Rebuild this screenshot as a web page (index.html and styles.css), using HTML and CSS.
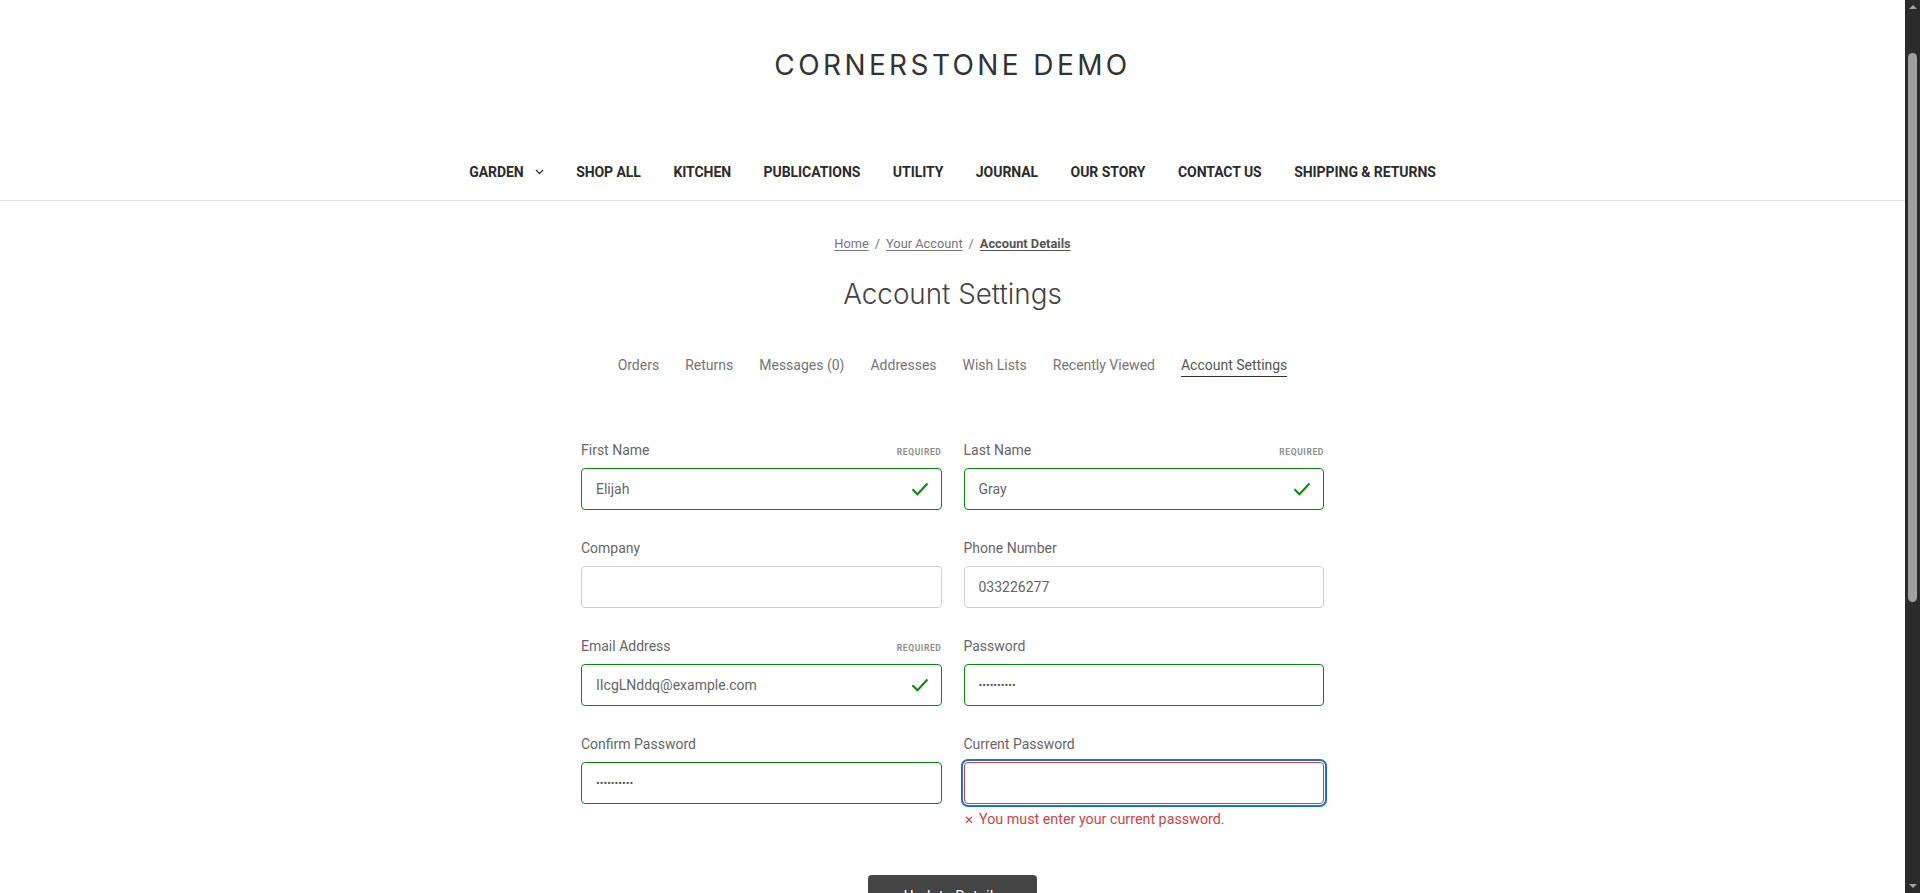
FILE: index.html
```html
<!DOCTYPE html>
<html lang="en">
<head>
<meta charset="utf-8">
<title>Account Settings - Cornerstone Demo</title>
<link rel="stylesheet" href="styles.css">
</head>
<body>
<div class="viewport">
  <div class="page">
    <header class="site-header">
      <h1 class="logo">CORNERSTONE DEMO</h1>
      <nav class="nav">
        <a class="nav-item" href="#">GARDEN <svg class="chev" width="9" height="6" viewBox="0 0 9 6"><path d="M1 1l3.5 3.5L8 1" fill="none" stroke="#333" stroke-width="1.3"/></svg></a>
        <a class="nav-item" href="#">SHOP ALL</a>
        <a class="nav-item" href="#">KITCHEN</a>
        <a class="nav-item" href="#">PUBLICATIONS</a>
        <a class="nav-item" href="#">UTILITY</a>
        <a class="nav-item" href="#">JOURNAL</a>
        <a class="nav-item" href="#">OUR STORY</a>
        <a class="nav-item" href="#">CONTACT US</a>
        <a class="nav-item" href="#">SHIPPING &amp; RETURNS</a>
      </nav>
    </header>

    <main class="account">
      <ol class="breadcrumbs">
        <li><a href="#">Home</a></li>
        <li class="sep">/</li>
        <li><a href="#">Your Account</a></li>
        <li class="sep">/</li>
        <li><a class="current" href="#">Account Details</a></li>
      </ol>
      <h2 class="page-heading">Account Settings</h2>
      <nav class="tabs">
        <a href="#">Orders</a>
        <a href="#">Returns</a>
        <a href="#">Messages (0)</a>
        <a href="#">Addresses</a>
        <a href="#">Wish Lists</a>
        <a href="#">Recently Viewed</a>
        <a href="#" class="active">Account Settings</a>
      </nav>

      <form class="form">
        <div class="grid">
          <div class="field">
            <div class="label-row"><label>First Name</label><small>REQUIRED</small></div>
            <div class="control">
              <input class="input success" type="text" value="Elijah">
              <svg class="check" width="18" height="14" viewBox="0 0 18 14"><path d="M1.5 7.2l5 5L16.5 1.5" fill="none" stroke="#0a8a0a" stroke-width="2"/></svg>
            </div>
          </div>
          <div class="field">
            <div class="label-row"><label>Last Name</label><small>REQUIRED</small></div>
            <div class="control">
              <input class="input success" type="text" value="Gray">
              <svg class="check" width="18" height="14" viewBox="0 0 18 14"><path d="M1.5 7.2l5 5L16.5 1.5" fill="none" stroke="#0a8a0a" stroke-width="2"/></svg>
            </div>
          </div>
          <div class="field">
            <div class="label-row"><label>Company</label></div>
            <div class="control"><input class="input" type="text" value=""></div>
          </div>
          <div class="field">
            <div class="label-row"><label>Phone Number</label></div>
            <div class="control"><input class="input" type="text" value="033226277"></div>
          </div>
          <div class="field">
            <div class="label-row"><label>Email Address</label><small>REQUIRED</small></div>
            <div class="control">
              <input class="input success" type="text" value="IIcgLNddq@example.com">
              <svg class="check" width="18" height="14" viewBox="0 0 18 14"><path d="M1.5 7.2l5 5L16.5 1.5" fill="none" stroke="#0a8a0a" stroke-width="2"/></svg>
            </div>
          </div>
          <div class="field">
            <div class="label-row"><label>Password</label></div>
            <div class="control"><input class="input success" type="password" value="aaaaaaaaaa"></div>
          </div>
          <div class="field">
            <div class="label-row"><label>Confirm Password</label></div>
            <div class="control"><input class="input success" type="password" value="aaaaaaaaaa"></div>
          </div>
          <div class="field">
            <div class="label-row"><label>Current Password</label></div>
            <div class="control"><input class="input error" type="password" value=""></div>
            <p class="error-msg"><span class="x">✕</span> You must enter your current password.</p>
          </div>
        </div>
        <div class="actions">
          <button type="button" class="button">Update Details</button>
        </div>
      </form>
    </main>
  </div>

  <div class="scrollbar">
    <span class="sb-up"></span>
    <span class="sb-thumb"></span>
    <span class="sb-fill"></span>
    <span class="sb-down"></span>
  </div>
</div>
</body>
</html>
```

FILE: styles.css
```css
* { box-sizing: border-box; }

html, body {
  margin: 0;
  padding: 0;
  height: 100%;
  overflow: hidden;
  background: #fff;
  font-family: Roboto, "Liberation Sans", sans-serif;
  color: #666;
}

a { color: inherit; text-decoration: none; }

.viewport {
  display: flex;
  height: 100vh;
}

.page {
  flex: 1;
  min-width: 0;
  overflow: hidden;
}

/* header */
.site-header {
  display: flex;
  flex-direction: column;
  align-items: center;
}

.logo {
  margin: 47px 0 0;
  font-family: Inter, "Open Sans", sans-serif;
  font-weight: 400;
  font-size: 28px;
  line-height: 36px;
  letter-spacing: 3.4px;
  color: #333;
}

.nav {
  margin-top: 63px;
  width: 100%;
  display: flex;
  justify-content: center;
  gap: 32.5px;
  padding: 16px 0 18px;
  border-bottom: 1px solid #e3e3e3;
}

.nav-item {
  display: flex;
  align-items: center;
  font-weight: 700;
  font-size: 14px;
  line-height: 20px;
  color: #2b2b2b;
  letter-spacing: -0.06px;
}

.chev { margin-left: 11px; }

/* account */
.account {
  display: flex;
  flex-direction: column;
  align-items: center;
}

.breadcrumbs {
  list-style: none;
  margin: 34px 0 0;
  padding: 0;
  display: flex;
  gap: 6px;
  font-size: 12.8px;
  line-height: 18px;
  color: #757575;
}

.breadcrumbs a { text-decoration: underline; text-underline-offset: 2px; }
.breadcrumbs .current { font-weight: 700; color: #545454; }

.page-heading {
  margin: 24px 0 0;
  font-family: Inter, "Open Sans", sans-serif;
  font-weight: 300;
  font-size: 27.8px;
  line-height: 34px;
  color: #444;
}

.tabs {
  margin-top: 44px;
  display: flex;
  gap: 26px;
  font-size: 14px;
  line-height: 20px;
  color: #757575;
}

.tabs a { padding-bottom: 1px; border-bottom: 1px solid transparent; }
.tabs a.active { color: #545454; border-bottom-color: #333; }

/* form */
.form {
  margin-top: 64px;
  width: 743px;
}

.grid {
  display: grid;
  grid-template-columns: 1fr 1fr;
  column-gap: 22px;
  row-gap: 29px;
}

.label-row {
  display: flex;
  justify-content: space-between;
  align-items: baseline;
  margin-bottom: 9px;
}

.label-row label {
  font-size: 14px;
  line-height: 18px;
  color: #666;
}

.label-row small {
  font-size: 8.5px;
  font-weight: 700;
  letter-spacing: 0.6px;
  color: #8f8f8f;
}

.control { position: relative; }

.input {
  display: block;
  width: 100%;
  height: 42px;
  padding: 0 14px;
  border: 1px solid #cfcfcf;
  border-radius: 4px;
  font-family: Roboto, "Liberation Sans", sans-serif;
  font-size: 14px;
  color: #666;
  background: #fff;
  outline: none;
}

.input[type="password"] { font-size: 11px; color: #555; }

.input.success { border-color: #0a8a0a; }

.input.error {
  border-color: #d14343;
  box-shadow: 0 0 0 1px #fff, 0 0 0 3px #1a6ee6;
}

.check {
  position: absolute;
  right: 13px;
  top: 14px;
}

.error-msg {
  margin: 6px 0 0;
  font-size: 14.3px;
  line-height: 18px;
  color: #d14343;
}

.error-msg .x { font-size: 12px; margin-right: 2px; }

.actions {
  margin-top: 46px;
  display: flex;
  justify-content: center;
}

.button {
  width: 169px;
  padding: 11px 0;
  border: 0;
  border-radius: 4px;
  background: #444;
  color: #fff;
  font-family: Roboto, "Liberation Sans", sans-serif;
  font-size: 15px;
  line-height: 20px;
}

/* fake scrollbar */
.scrollbar {
  flex: none;
  width: 15px;
  height: 100vh;
  background: #2b2b2b;
  display: flex;
  flex-direction: column;
  align-items: center;
}

.sb-up, .sb-down {
  flex: none;
  width: 0;
  height: 0;
  border-left: 4px solid transparent;
  border-right: 4px solid transparent;
}

.sb-up { margin-top: 5px; border-bottom: 4px solid #a3a3a3; }
.sb-down { margin-bottom: 5px; border-top: 4px solid #a3a3a3; }

.sb-thumb {
  flex: none;
  margin-top: 44px;
  width: 9px;
  height: 549px;
  border-radius: 5px;
  background: #9f9f9f;
}

.sb-fill { flex: 1; }
```
